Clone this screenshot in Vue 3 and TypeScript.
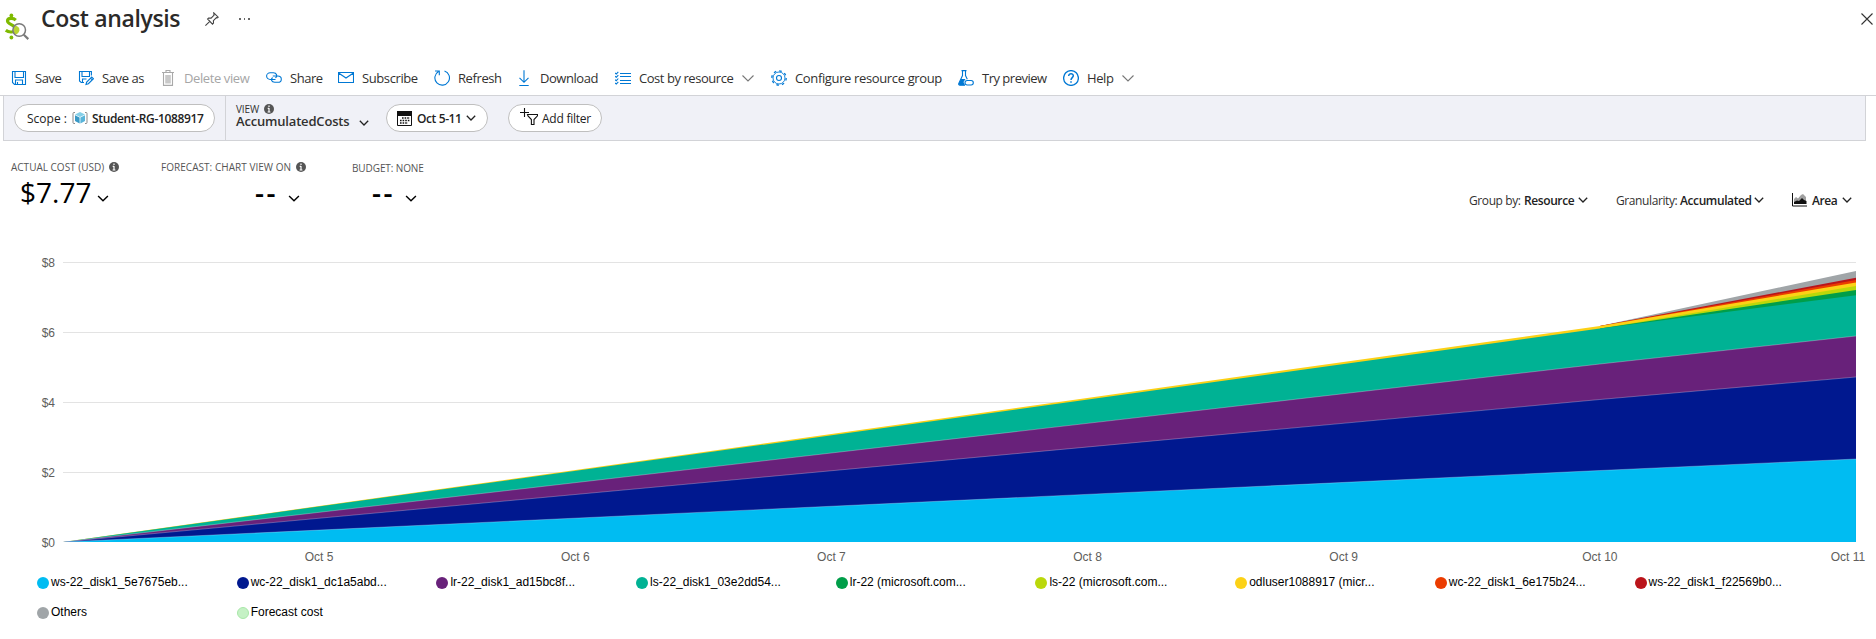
<script setup lang="ts">
interface Command { icon: string; label: string; menu?: boolean; disabled?: boolean }
interface Series { name: string; color: string; tops: number[]; seam?: boolean; late?: boolean }

const commands: Command[] = [
  { icon: 'save', label: 'Save' },
  { icon: 'saveas', label: 'Save as' },
  { icon: 'trash', label: 'Delete view', disabled: true },
  { icon: 'share', label: 'Share' },
  { icon: 'mail', label: 'Subscribe' },
  { icon: 'refresh', label: 'Refresh' },
  { icon: 'download', label: 'Download' },
  { icon: 'list', label: 'Cost by resource', menu: true },
  { icon: 'gear', label: 'Configure resource group' },
  { icon: 'flask', label: 'Try preview' },
  { icon: 'help', label: 'Help', menu: true },
]

// Plot geometry: one column per day, about 35px per dollar.
const left = 63
const step = 256.14
const base = 292
const gridlines = [8, 6, 4, 2, 0].map(v => ({ label: '$' + v, y: base - v * 34.94 }))
const days = [5, 6, 7, 8, 9, 10, 11].map((d, i) => ({
  label: 'Oct ' + d,
  x: d === 11 ? 1848 : left + step * (i + 1),
}))

// Upper edge of each stacked series (pixels above the baseline) on day 6 and day 7.
// A "late" series has no cost before day 6.
const series: Series[] = [
  { name: 'ws-22_disk1_5e7675eb...', color: '#00bcf2', tops: [71.5, 83], seam: true },
  { name: 'wc-22_disk1_dc1a5abd...', color: '#00188f', tops: [142.5, 165], seam: true },
  { name: 'lr-22_disk1_ad15bc8f...', color: '#68217a', tops: [178, 206], seam: true },
  { name: 'ls-22_disk1_03e2dd54...', color: '#00b294', tops: [213.5, 246.8] },
  { name: 'lr-22 (microsoft.com...', color: '#009e49', tops: [213.5, 252], late: true },
  { name: 'ls-22 (microsoft.com...', color: '#bad80a', tops: [213.5, 256], late: true },
  { name: 'odluser1088917 (micr...', color: '#fcd116', tops: [216, 259.5] },
  { name: 'wc-22_disk1_6e175b24...', color: '#eb3c00', tops: [216, 262], late: true },
  { name: 'ws-22_disk1_f22569b0...', color: '#ba141a', tops: [216, 264.3], late: true },
  { name: 'Others', color: '#a0a5a8', tops: [216, 271], late: true },
]
const legend = [...series, { name: 'Forecast cost', color: '#c5f1c5', tops: [] }]

function edge(s: Series): string {
  return `${left + step * 6},${base - s.tops[0]} ${left + step * 7},${base - s.tops[1]}`
}
function area(s: Series): string {
  const start = s.late ? '' : `${left},${base} `
  return `${start}${edge(s)} ${left + step * 7},${base}`
}
const stacked = [...series].reverse()
</script>

<template>
  <div class="page">
    <header class="head">
      <svg class="logo" viewBox="0 0 26 28">
        <path d="M11.800 8.200C9.500 5.900 3.700 5.500 3.500 8.900c-.1 3.700 8 3.700 7.900 7.800-.1 4.200-6.500 4-9.600 1.600" fill="none" stroke="#7fba00" stroke-width="3.200" />
        <circle cx="7.400" cy="3.400" r="1.900" fill="#7fba00" /><circle cx="7.400" cy="25.500" r="1.900" fill="#7fba00" />
        <circle cx="15.200" cy="18" r="6.400" fill="#fff" />
        <path d="M11 13.600q4.800 1 4.400 4.600-.5 3.500-4 4.300a6 6 0 01-.4-8.900z" fill="#b8d432" />
        <circle cx="15.200" cy="18" r="6.300" fill="none" stroke="#7a7a7a" stroke-width="1.500" />
        <path d="M19.800 22.800l4.500 4.300" fill="none" stroke="#7a7a7a" stroke-width="2.200" />
      </svg>
      <h1>Cost analysis</h1>
      <svg class="pin" viewBox="0 0 14 14" fill="none" stroke="#444" stroke-width="1.100"><path d="M8.800.8l4.400 4.400-1 .6-.8-.2-3 3 .1 2.500-1 1L2.600 7l1-1 2.500.1 3-3-.2-.8zM4.800 9.300L.4 13.600" /></svg>
      <span class="dots"><i /><i /><i /></span>
      <svg class="close" viewBox="0 0 12 12" stroke="#333" stroke-width="1.100"><path d="M.5.500l11 11M11.500.500l-11 11" /></svg>
    </header>

    <nav class="commands">
      <div v-for="c in commands" :key="c.label" class="command" :class="[c.icon, { disabled: c.disabled }]">
        <svg class="cicon" viewBox="0 0 16 16" fill="none" stroke="#0078d4" stroke-width="1.100">
          <g v-if="c.icon === 'save'"><path d="M1.500 1.500h13v13h-11l-2-2zM4 1.500v6h8.500v-6M4.500 14.500v-4.500h7v4.500M6.500 12v2.500" /></g>
          <g v-else-if="c.icon === 'saveas'"><path d="M6 12.500H3.200L1.500 11V1.500h11.900v4M4 1.500v5h7.500v-5M4.500 12.500V9h4M8 14.500l.7-2.500 5-5 1.700 1.700-5 5zM12.500 8.200l1.700 1.700" /></g>
          <g v-else-if="c.icon === 'trash'" stroke="#a9a9a9"><path d="M2 2.500h12M6 2.500V.5h4v2M3.500 2.500v12.900h9V2.500" /><path d="M5.200 5h5.600v8.500H5.200z" fill="#c8c8c8" stroke="none" /></g>
          <g v-else-if="c.icon === 'share'"><path d="M9.500 9.800H4.200a3.600 3.600 0 010-7.200h3.200c3.300 0 4.500 3.700 2 5.600M6.800 6h5a3.500 3.500 0 010 7H8.700C5.500 13 4.400 9.500 6.600 7.700" transform="translate(0 .4) scale(1 .92)" /></g>
          <g v-else-if="c.icon === 'mail'"><path d="M.5 2.500h15v10H.5zM.6 3l7.400 5 7.400-5" /></g>
          <g v-else-if="c.icon === 'refresh'"><path d="M10.500.9a7.300 7.300 0 11-6 .6M1 1h4.300v4.300" /></g>
          <g v-else-if="c.icon === 'download'"><path d="M8 .2v12M3.500 7.800L8 12.300l4.500-4.500M3.300 15.500h9.400" /></g>
          <g v-else-if="c.icon === 'list'"><path d="M5 3.500h11M5 6.500h11M5 10.500h11M5 13.500h11M0 3l1.300 1 2-2.200M0 6.300l1.300 1 2-2.200M0 9.700l1.300 1 2-2.200M0 13l1.300 1 2-2.200" /></g>
          <g v-else-if="c.icon === 'gear'"><circle cx="8" cy="8" r="6" stroke-width=".9" /><circle cx="8" cy="8" r="7.200" stroke-dasharray="2.600 3.050" stroke-width="1.300" /><circle cx="8" cy="8" r="2.500" /></g>
          <g v-else-if="c.icon === 'flask'"><path d="M3.500.6h5M4.500.6v5L.8 13.400q-.5 1.800 1.200 1.800h5M7.500.6v5l1.800 3.600" /><path d="M3 9h4.500l-2 3 1.500 3.200H1.500l-.8-1.500z" fill="#0078d4" stroke="none" /><rect x="7" y="10.500" width="8.300" height="4.500" rx="2.200" fill="#fff" /></g>
          <g v-else><circle cx="8" cy="8" r="7.400" stroke-width="1.300" /><path d="M5.700 6c0-3.200 4.700-2.900 4.600-.2C10.200 7.600 8 7.700 8 10M8 11.300v1.500" stroke-width="1.500" /></g>
        </svg>
        <span class="label">{{ c.label }}</span>
        <svg v-if="c.menu" class="wide-chevron" viewBox="0 0 12 7"><path d="M.5.500L6 6 11.500.5" fill="none" stroke="#777" stroke-width="1.100" /></svg>
      </div>
    </nav>

    <section class="bar-wrap">
      <div class="bar">
        <div class="scope-cell">
          <div class="pill scope">
            <span class="scope-key">Scope :</span>
            <svg class="cube" viewBox="0 0 16 14"><path d="M3 1.500H2Q1 1.500 1 2.500v9q0 1 1 1h1M13 1.500h1q1 0 1 1v9q0 1-1 1h-1" fill="none" stroke="#8a8a8a" /><path d="M8 1l5 2.500L8 6 3 3.500z" fill="#84cfe8" /><path d="M3 4.200l4.600 2.300v6L3 10z" fill="#3999c6" /><path d="M13 4.200L8.400 6.500v6L13 10z" fill="#59b4d9" /></svg>
            <b class="scope-name">Student-RG-1088917</b>
          </div>
        </div>
        <div class="view">
          <div class="view-key">VIEW <svg class="info" viewBox="0 0 10 10"><circle cx="5" cy="5" r="5" fill="#555" /><path d="M5 1.500v1.600M5 4v4.200M3.700 4.400H5M3.600 8h2.800" stroke="#fff" stroke-width="1.200" /></svg></div>
          <div class="view-name"><b>AccumulatedCosts</b><svg class="chevron" viewBox="0 0 10 6"><path d="M.8.800L5 5 9.200.8" /></svg></div>
        </div>
        <div class="pill dates">
          <svg class="calendar" viewBox="0 0 15 15"><path d="M.5.500h14v14H.5z" fill="#fff" stroke="#111" /><path d="M0 0h15v5H0z" fill="#111" /><path d="M5 7h8M3 9.500h10M3 12h8" stroke="#111" stroke-width="1.600" stroke-dasharray="1.600 1" /></svg>
          <b>Oct 5-11</b>
          <svg class="chevron" viewBox="0 0 10 6"><path d="M.8.800L5 5 9.200.8" /></svg>
        </div>
        <div class="pill filter">
          <svg class="funnel" viewBox="0 0 18 17" fill="none" stroke="#111" stroke-width="1.100"><path d="M4.500 0v9M0 4.500h9M7.500 6.500h10v1.300L14 11.500v5h-2.600v-5L8 8z" /></svg>
          <span>Add filter</span>
        </div>
      </div>
    </section>

    <section class="summary">
      <div class="stat actual">
        <div class="key"><span>ACTUAL COST (USD)</span><svg class="info" viewBox="0 0 10 10"><circle cx="5" cy="5" r="5" fill="#555" /><path d="M5 1.500v1.600M5 4v4.200M3.700 4.400H5M3.600 8h2.800" stroke="#fff" stroke-width="1.200" /></svg></div>
        <div class="value"><span>$7.77</span><svg class="chevron" viewBox="0 0 10 6"><path d="M.8.800L5 5 9.200.8" /></svg></div>
      </div>
      <div class="stat forecast">
        <div class="key"><span>FORECAST: CHART VIEW ON</span><svg class="info" viewBox="0 0 10 10"><circle cx="5" cy="5" r="5" fill="#555" /><path d="M5 1.500v1.600M5 4v4.200M3.700 4.400H5M3.600 8h2.800" stroke="#fff" stroke-width="1.200" /></svg></div>
        <div class="value"><span>--</span><svg class="chevron" viewBox="0 0 10 6"><path d="M.8.800L5 5 9.200.8" /></svg></div>
      </div>
      <div class="stat budget">
        <div class="key"><span>BUDGET: NONE</span></div>
        <div class="value"><span>--</span><svg class="chevron" viewBox="0 0 10 6"><path d="M.8.800L5 5 9.200.8" /></svg></div>
      </div>
      <div class="options">
        <div class="option group"><span>Group by:</span><b>Resource</b><svg class="chevron" viewBox="0 0 10 6"><path d="M.8.800L5 5 9.200.8" /></svg></div>
        <div class="option grain"><span>Granularity:</span><b>Accumulated</b><svg class="chevron" viewBox="0 0 10 6"><path d="M.8.800L5 5 9.200.8" /></svg></div>
        <div class="option kind">
          <svg class="areaicon" viewBox="0 0 15 14"><path d="M2 10V6l2-2 2 1.500L9 2l2-1 3 3v6z" fill="#a0a0a0" /><path d="M2 11V9l3-1.500 2 .5 3-3 2 2 2.500 1v3z" fill="#111" /><path d="M.5 0v13H15" fill="none" stroke="#111" /></svg>
          <b>Area</b><svg class="chevron" viewBox="0 0 10 6"><path d="M.8.800L5 5 9.200.8" /></svg>
        </div>
      </div>
    </section>

    <svg class="chart" width="1876" height="320" viewBox="0 0 1876 320">
      <g v-for="g in gridlines" :key="g.label">
        <line :x1="left" :x2="left + step * 7" :y1="Math.floor(g.y) + .5" :y2="Math.floor(g.y) + .5" :stroke="g.label === '$0' ? 'none' : '#e3e3e3'" />
        <text x="55" :y="g.y + 4.500" text-anchor="end">{{ g.label }}</text>
      </g>
      <g v-for="s in stacked" :key="s.name">
        <polygon :points="area(s)" :fill="s.color" />
        <polyline v-if="s.seam" :points="`${left},${base} ${edge(s)}`" fill="none" stroke="#fff" stroke-opacity=".3" stroke-width=".9" />
      </g>
      <text v-for="d in days" :key="d.label" :x="d.x" y="310.500" text-anchor="middle">{{ d.label }}</text>
    </svg>

    <ul class="legend">
      <li v-for="item in legend" :key="item.name">
        <svg class="dot" viewBox="0 0 12 12"><circle cx="6" cy="6" :r="item.tops.length ? 6 : 5.500" :fill="item.color" :stroke="item.tops.length ? 'none' : '#a8e6a8'" /></svg>
        <span>{{ item.name }}</span>
      </li>
    </ul>
  </div>
</template>

<style>
body { background: #fff; overflow: hidden; }
</style>

<style scoped>
.page { width: 1876px; height: 639px; overflow: hidden; font-family: "Open Sans", "Noto Sans", sans-serif; font-size: 13px; color: #323130; background: #fff; }
svg { display: block; flex: none; }
span, b, h1 { white-space: nowrap; }
b { font-weight: 600; }
.head { display: flex; height: 60px; box-sizing: border-box; padding-left: 4px; }
.logo { width: 26px; height: 28px; margin-top: 12px; }
h1 { margin: 0 0 0 11px; width: 164px; font-size: 23px; line-height: 37px; font-weight: 600; color: #2b2a29; letter-spacing: -.35px; }
.pin { width: 14px; height: 14px; margin-top: 12px; }
.dots { display: flex; gap: 3px; margin: 18px 0 0 20px; }
.dots i { width: 1.500px; height: 2px; background: #666; }
.close { width: 12px; height: 12px; margin: 13px 3px 0 auto; }
.commands { display: grid; grid-template-columns: 67px 82px 106px 72px 96px 82px 99px 156px 187px 105px 90px; height: 35px; padding-left: 11px; }
.command { display: flex; align-items: center; height: 35px; }
.cicon { width: 16px; height: 16px; }
.label { margin: 1px 0 0 8px; letter-spacing: -.4px; }
.list .label, .download .label, .save .label, .share .label { letter-spacing: -.45px; }
.gear .label { letter-spacing: -.36px; }
.flask .label { letter-spacing: -.5px; }
.disabled .label { color: #a6a6a6; }
.wide-chevron { width: 12px; height: 7px; margin: 2px 0 0 9px; }
.help .wide-chevron { margin-left: 8px; }
.bar-wrap { box-sizing: border-box; border-top: 1px solid #d2d3d7; padding-left: 3px; height: 46px; }
.bar { box-sizing: border-box; width: 1863px; height: 45px; background: #f0f1f7; border: 1px solid #d2d3d7; border-top: 0; display: flex; align-items: center; }
.scope-cell { box-sizing: border-box; width: 222px; height: 44px; padding: 8px 0 0 10px; border-right: 1px solid #d2d3d7; }
.pill { box-sizing: border-box; height: 28px; border: 1px solid #bfbfbf; border-radius: 14px; background: #fff; display: flex; align-items: center; color: #222; font-size: 12px; }
.scope { width: 201px; padding-left: 12px; }
.scope-key { width: 45px; }
.cube { width: 16px; height: 14px; }
.scope-name { margin-left: 4px; letter-spacing: -.35px; }
.view { width: 150px; padding-left: 10px; height: 44px; }
.view-key { display: flex; align-items: center; gap: 5px; font-size: 10px; line-height: 12px; height: 12px; margin-top: 7px; letter-spacing: -.1px; }
.info { width: 10px; height: 10px; }
.view-name { display: flex; align-items: center; height: 14px; line-height: 14px; margin-top: -1px; }
.view-name b { width: 124px; font-size: 13px; letter-spacing: -.18px; line-height: 12px; }
.view-name .chevron { margin: 3px 0 0 -1px; }
.chevron { width: 10px; height: 6px; fill: none; stroke: #222; stroke-width: 1.300; }
.dates { width: 102px; padding-left: 10px; }
.calendar { width: 15px; height: 15px; }
.dates b { margin-left: 5px; width: 49px; letter-spacing: -.4px; }
.filter { width: 94px; margin-left: 20px; padding-left: 11px; }
.funnel { width: 18px; height: 17px; margin-top: -4px; }
.filter span { margin-left: 4px; letter-spacing: -.25px; }
.summary { display: flex; height: 109px; }
.stat { box-sizing: border-box; padding-top: 18px; }
.actual { width: 150px; padding-left: 11px; }
.forecast { width: 202px; padding-left: 11px; }
.key { display: flex; align-items: center; gap: 5px; height: 16px; font-size: 10px; color: #555; }
.forecast .key { letter-spacing: .04px; }
.budget .key { padding-top: 1px; height: 15px; letter-spacing: -.1px; }
.value { display: flex; align-items: center; height: 33px; font-size: 28px; color: #000; }
.value .chevron { width: 12px; height: 7px; margin-top: 14px; stroke: #000; stroke-width: 1.200; }
.actual .value { padding-left: 9px; }
.actual .value span { width: 77px; }
.forecast .value { padding-left: 94px; }
.budget .value { padding-left: 20px; }
.forecast .value span, .budget .value span { width: 33px; letter-spacing: 2.500px; font-weight: 600; }
.budget { padding-left: 0; }
.options { display: flex; margin: 49px 0 0 auto; height: 20px; font-size: 12px; }
.option { display: flex; align-items: center; }
.option b { color: #222; letter-spacing: -.4px; }
.group { width: 147px; }
.group span { width: 55px; letter-spacing: -.4px; }
.group b { width: 54px; }
.grain { width: 176px; }
.grain span { width: 64px; letter-spacing: -.4px; }
.grain b { width: 74px; }
.kind { width: 84px; }
.areaicon { width: 15px; height: 14px; }
.kind b { margin-left: 5px; width: 30px; }
.chart { display: block; }
.chart text { font: 12px "Liberation Sans", Arial, sans-serif; fill: #605e5c; }
.legend { display: grid; grid-template-columns: repeat(9, 199.700px); grid-auto-rows: 30px; list-style: none; margin: 6px 0 0; padding: 0 0 0 37px; font: 12px "Liberation Sans", Arial, sans-serif; color: #000; }
.legend li { display: flex; align-items: flex-start; height: 14px; }
.dot { width: 12px; height: 12px; margin-top: 1px; }
.legend span { margin-left: 2px; line-height: 13px; }
</style>
